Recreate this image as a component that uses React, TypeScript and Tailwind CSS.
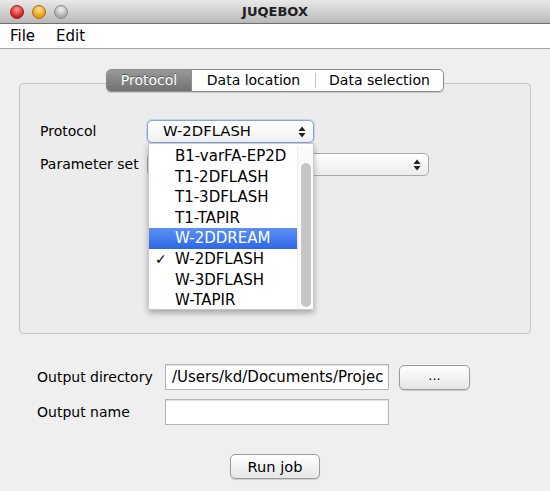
import React from 'react';

const items = ['B1-varFA-EP2D', 'T1-2DFLASH', 'T1-3DFLASH', 'T1-TAPIR', 'W-2DDREAM', 'W-2DFLASH', 'W-3DFLASH', 'W-TAPIR'];

function Arrows() {
  return (
    <svg width="8" height="12" viewBox="0 0 8 12" className="shrink-0">
      <path d="M4 0.5 L7.5 5 H0.5 Z" fill="#222" />
      <path d="M4 11.5 L7.5 7 H0.5 Z" fill="#222" />
    </svg>
  );
}

function Light({ from, to, border }: { from: string; to: string; border: string }) {
  return (
    <div
      className="h-[14px] w-[14px] rounded-full border"
      style={{ background: `radial-gradient(circle at 50% 30%, ${from} 0%, ${to} 70%)`, borderColor: border }}
    />
  );
}

export default function App() {
  return (
    <div className="relative h-[491px] w-[550px] overflow-hidden bg-[#efefef] font-['DejaVu_Sans',sans-serif] text-[14px] text-black">
      {/* title bar */}
      <div className="relative flex h-[24px] items-center border-b border-[#6f6f6f] bg-gradient-to-b from-[#e9e9e9] to-[#b9b9b9]">
        <div className="flex items-center gap-[8px] pl-[10px]">
          <Light from="#ff9a9a" to="#d31a1a" border="#9c1c1c" />
          <Light from="#ffe29a" to="#e39a0e" border="#a8700f" />
          <Light from="#f4f4f4" to="#a9a9a9" border="#8a8a8a" />
        </div>
        <div className="absolute inset-x-0 text-center text-[13px] font-bold text-[#202020]">JUQEBOX</div>
      </div>

      {/* menu bar */}
      <div className="flex h-[25px] items-center gap-[21px] border-b border-[#a3a3a3] bg-white pl-[10px] text-[15px]">
        <span>File</span>
        <span>Edit</span>
      </div>

      <div className="px-[19px] pt-[20px]">
        {/* tabs */}
        <div className="relative z-10 flex justify-center">
          <div className="flex h-[23px] overflow-hidden rounded-[5px] border border-[#8c8c8c] bg-white shadow-[0_1px_1px_rgba(0,0,0,0.15)]">
            <div className="flex w-[84px] items-center justify-center bg-gradient-to-b from-[#999999] to-[#717171] text-white [text-shadow:0_-1px_0_rgba(0,0,0,0.4)]">
              Protocol
            </div>
            <div className="flex w-[124px] items-center justify-center border-l border-[#8c8c8c]">Data location</div>
            <div className="flex items-center py-[3px]">
              <div className="h-full w-px bg-[#c4c4c4]" />
            </div>
            <div className="flex w-[127px] items-center justify-center">Data selection</div>
          </div>
        </div>

        {/* tab panel */}
        <div className="-mt-[9px] h-[251px] rounded-[4px] border border-[#c6c6c6] bg-[#ececec] pl-[20px] pt-[36px]">
          <div className="flex items-center">
            <span className="w-[107px]">Protocol</span>
            <div className="relative">
              <div className="flex h-[23px] w-[167px] items-center justify-between rounded-[5px] border border-[#7fa6dd] bg-gradient-to-b from-white to-[#f0f0f0] pl-[15px] pr-[7px] text-[14.8px] shadow-[0_0_0_1px_rgba(120,165,225,0.35)]">
                <span>W-2DFLASH</span>
                <Arrows />
              </div>
              {/* open popup list */}
              <div className="absolute left-[1px] top-[23px] z-20 flex h-[167px] w-[166px] border border-[#c9c9c9] bg-white pt-[2px] shadow-[0_3px_6px_rgba(0,0,0,0.3)]">
                <div className="flex-1">
                  {items.map((it) => {
                    const sel = it === 'W-2DDREAM';
                    const checked = it === 'W-2DFLASH';
                    return (
                      <div
                        key={it}
                        className={
                          sel
                            ? 'flex h-[20.6px] items-center bg-gradient-to-b from-[#5d90f5] to-[#2d67e6] pl-[26px] text-[15px] text-white'
                            : 'relative flex h-[20.6px] items-center pl-[26px] text-[15px]'
                        }
                      >
                        {checked && <span className="absolute left-[6px] text-[14px] font-bold">✓</span>}
                        {it}
                      </div>
                    );
                  })}
                </div>
                <div className="w-[16px] border-l border-[#ededed] bg-[#fafafa] px-[3px] pb-[2px] pt-[17px]">
                  <div className="h-full w-[10px] rounded-full bg-[#c6c6c6]" />
                </div>
              </div>
            </div>
          </div>
          <div className="mt-[10px] flex items-center">
            <span className="w-[107px]">Parameter set</span>
            <div className="flex h-[23px] w-[282px] items-center justify-end rounded-[5px] border border-[#a9a9a9] bg-gradient-to-b from-white to-[#ececec] pr-[7px]">
              <Arrows />
            </div>
          </div>
        </div>
      </div>

      {/* output section */}
      <div className="flex flex-col gap-[9px] pl-[37px] pt-[30px]">
        <div className="flex items-center">
          <span className="w-[128px]">Output directory</span>
          <div className="flex h-[26px] w-[224px] items-center overflow-hidden whitespace-nowrap border border-[#b5b5b5] bg-white pl-[6px] text-[15px] shadow-[inset_0_1px_1px_rgba(0,0,0,0.12)]">
            <span className="block w-[212px] overflow-hidden">/Users/kd/Documents/Projec</span>
          </div>
          <div className="ml-[10px] flex h-[25px] w-[71px] items-center justify-center rounded-[5px] border border-[#9c9c9c] bg-gradient-to-b from-white to-[#e6e6e6] pb-[3px] text-[13px] shadow-[0_1px_1px_rgba(0,0,0,0.15)]">
            ...
          </div>
        </div>
        <div className="flex items-center">
          <span className="w-[128px]">Output name</span>
          <div className="h-[26px] w-[224px] border border-[#b5b5b5] bg-white shadow-[inset_0_1px_1px_rgba(0,0,0,0.12)]" />
        </div>
      </div>

      <div className="flex justify-center pt-[29px]">
        <div className="flex h-[25px] w-[90px] items-center justify-center rounded-[5px] border border-[#9c9c9c] bg-gradient-to-b from-white to-[#e6e6e6] text-[14.6px] shadow-[0_1px_1px_rgba(0,0,0,0.15)]">
          Run job
        </div>
      </div>
    </div>
  );
}
